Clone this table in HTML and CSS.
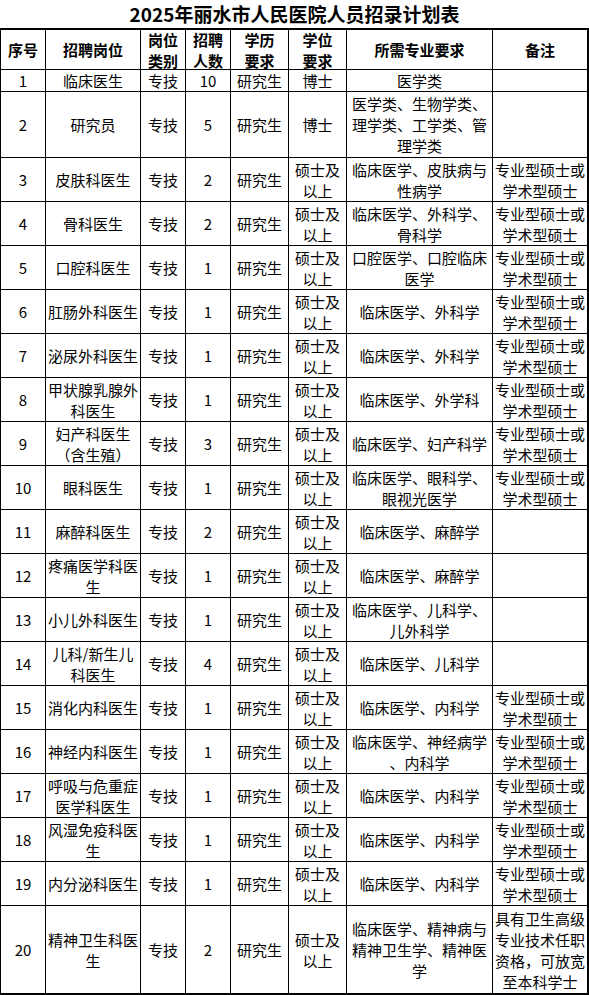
FILE: index.html
```html
<!DOCTYPE html>
<html lang="zh-CN">
<head>
<meta charset="utf-8">
<title>2025年丽水市人民医院人员招录计划表</title>
<link rel="stylesheet" href="styles.css">
</head>
<body>
<div class="title">2025年丽水市人民医院人员招录计划表</div>
<div class="grid">
  <div class="c h">序号</div><div class="c h">招聘岗位</div><div class="c h">岗位<br>类别</div><div class="c h">招聘<br>人数</div><div class="c h">学历<br>要求</div><div class="c h">学位<br>要求</div><div class="c h">所需专业要求</div><div class="c h last">备注</div>

  <div class="c">1</div><div class="c">临床医生</div><div class="c">专技</div><div class="c">10</div><div class="c">研究生</div><div class="c">博士</div><div class="c">医学类</div><div class="c last"></div>

  <div class="c">2</div><div class="c">研究员</div><div class="c">专技</div><div class="c">5</div><div class="c">研究生</div><div class="c">博士</div><div class="c">医学类、生物学类、<br>理学类、工学类、管<br>理学类</div><div class="c last"></div>

  <div class="c">3</div><div class="c">皮肤科医生</div><div class="c">专技</div><div class="c">2</div><div class="c">研究生</div><div class="c">硕士及<br>以上</div><div class="c">临床医学、皮肤病与<br>性病学</div><div class="c last">专业型硕士或<br>学术型硕士</div>

  <div class="c">4</div><div class="c">骨科医生</div><div class="c">专技</div><div class="c">2</div><div class="c">研究生</div><div class="c">硕士及<br>以上</div><div class="c">临床医学、外科学、<br>骨科学</div><div class="c last">专业型硕士或<br>学术型硕士</div>

  <div class="c">5</div><div class="c">口腔科医生</div><div class="c">专技</div><div class="c">1</div><div class="c">研究生</div><div class="c">硕士及<br>以上</div><div class="c">口腔医学、口腔临床<br>医学</div><div class="c last">专业型硕士或<br>学术型硕士</div>

  <div class="c">6</div><div class="c">肛肠外科医生</div><div class="c">专技</div><div class="c">1</div><div class="c">研究生</div><div class="c">硕士及<br>以上</div><div class="c">临床医学、外科学</div><div class="c last">专业型硕士或<br>学术型硕士</div>

  <div class="c">7</div><div class="c">泌尿外科医生</div><div class="c">专技</div><div class="c">1</div><div class="c">研究生</div><div class="c">硕士及<br>以上</div><div class="c">临床医学、外科学</div><div class="c last">专业型硕士或<br>学术型硕士</div>

  <div class="c">8</div><div class="c">甲状腺乳腺外<br>科医生</div><div class="c">专技</div><div class="c">1</div><div class="c">研究生</div><div class="c">硕士及<br>以上</div><div class="c">临床医学、外学科</div><div class="c last">专业型硕士或<br>学术型硕士</div>

  <div class="c">9</div><div class="c">妇产科医生<br>（含生殖）</div><div class="c">专技</div><div class="c">3</div><div class="c">研究生</div><div class="c">硕士及<br>以上</div><div class="c">临床医学、妇产科学</div><div class="c last">专业型硕士或<br>学术型硕士</div>

  <div class="c">10</div><div class="c">眼科医生</div><div class="c">专技</div><div class="c">1</div><div class="c">研究生</div><div class="c">硕士及<br>以上</div><div class="c">临床医学、眼科学、<br>眼视光医学</div><div class="c last">专业型硕士或<br>学术型硕士</div>

  <div class="c">11</div><div class="c">麻醉科医生</div><div class="c">专技</div><div class="c">2</div><div class="c">研究生</div><div class="c">硕士及<br>以上</div><div class="c">临床医学、麻醉学</div><div class="c last"></div>

  <div class="c">12</div><div class="c">疼痛医学科医<br>生</div><div class="c">专技</div><div class="c">1</div><div class="c">研究生</div><div class="c">硕士及<br>以上</div><div class="c">临床医学、麻醉学</div><div class="c last"></div>

  <div class="c">13</div><div class="c">小儿外科医生</div><div class="c">专技</div><div class="c">1</div><div class="c">研究生</div><div class="c">硕士及<br>以上</div><div class="c">临床医学、儿科学、<br>儿外科学</div><div class="c last"></div>

  <div class="c">14</div><div class="c">儿科/新生儿<br>科医生</div><div class="c">专技</div><div class="c">4</div><div class="c">研究生</div><div class="c">硕士及<br>以上</div><div class="c">临床医学、儿科学</div><div class="c last"></div>

  <div class="c">15</div><div class="c">消化内科医生</div><div class="c">专技</div><div class="c">1</div><div class="c">研究生</div><div class="c">硕士及<br>以上</div><div class="c">临床医学、内科学</div><div class="c last">专业型硕士或<br>学术型硕士</div>

  <div class="c">16</div><div class="c">神经内科医生</div><div class="c">专技</div><div class="c">1</div><div class="c">研究生</div><div class="c">硕士及<br>以上</div><div class="c">临床医学、神经病学<br>、内科学</div><div class="c last">专业型硕士或<br>学术型硕士</div>

  <div class="c">17</div><div class="c">呼吸与危重症<br>医学科医生</div><div class="c">专技</div><div class="c">1</div><div class="c">研究生</div><div class="c">硕士及<br>以上</div><div class="c">临床医学、内科学</div><div class="c last">专业型硕士或<br>学术型硕士</div>

  <div class="c">18</div><div class="c">风湿免疫科医<br>生</div><div class="c">专技</div><div class="c">1</div><div class="c">研究生</div><div class="c">硕士及<br>以上</div><div class="c">临床医学、内科学</div><div class="c last">专业型硕士或<br>学术型硕士</div>

  <div class="c">19</div><div class="c">内分泌科医生</div><div class="c">专技</div><div class="c">1</div><div class="c">研究生</div><div class="c">硕士及<br>以上</div><div class="c">临床医学、内科学</div><div class="c last">专业型硕士或<br>学术型硕士</div>

  <div class="c">20</div><div class="c">精神卫生科医<br>生</div><div class="c">专技</div><div class="c">2</div><div class="c">研究生</div><div class="c">硕士及<br>以上</div><div class="c">临床医学、精神病与<br>精神卫生学、精神医<br>学</div><div class="c last">具有卫生高级<br>专业技术任职<br>资格，可放宽<br>至本科学士</div>
</div>
</body>
</html>
```

FILE: styles.css
```css
html, body {
  margin: 0;
  padding: 0;
  background: #fff;
}
body {
  font-family: "Noto Sans CJK SC", "Microsoft YaHei", sans-serif;
  color: #000;
  width: 589px;
}
.title {
  height: 28px;
  font-size: 19px;
  font-weight: bold;
  line-height: 28px;
  text-align: center;
  white-space: nowrap;
}
.grid {
  display: grid;
  grid-template-columns: 45px 95px 45px 45px 58px 58px 146px 96px;
  grid-template-rows: 40px 22px 66px repeat(17, 44px) 88px;
  border-top: 2px solid #000;
  border-left: 1px solid #000;
  border-bottom: 1px solid #000;
  width: 589px;
  box-sizing: border-box;
}
.c {
  box-sizing: border-box;
  border-right: 1px solid #000;
  border-bottom: 1px solid #000;
  display: flex;
  align-items: center;
  justify-content: center;
  text-align: center;
  font-size: 15px;
  line-height: 21px;
  white-space: nowrap;
  overflow: visible;
}
.c.last {
  border-right: 2px solid #000;
}
.c.h {
  font-weight: bold;
}
```
